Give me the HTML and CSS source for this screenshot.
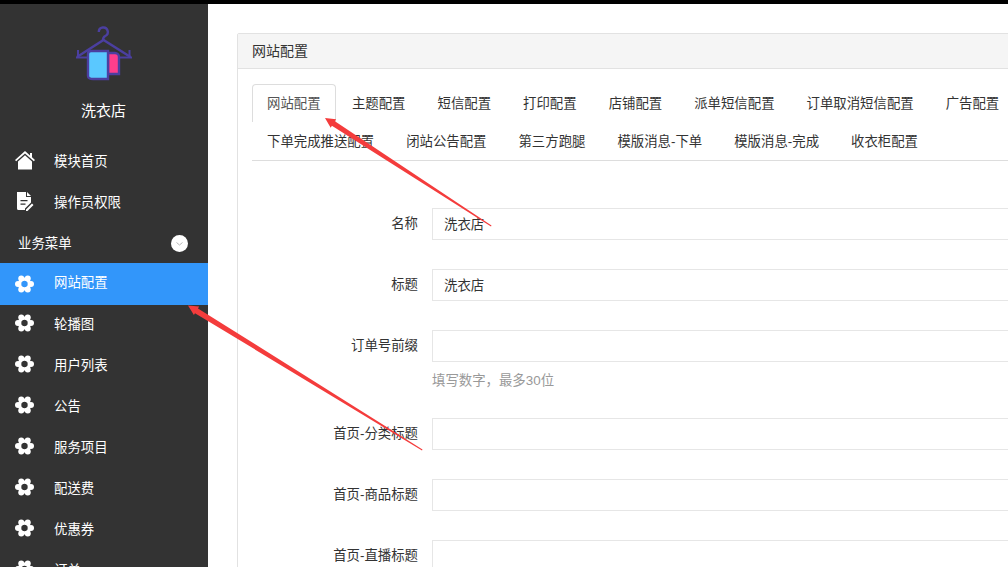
FILE: index.html
```html
<!DOCTYPE html>
<html lang="zh">
<head>
<meta charset="utf-8">
<title>网站配置</title>
<link rel="stylesheet" href="styles.css">
</head>
<body>
<svg width="0" height="0" class="defs">
  <defs>
    <symbol id="gear" viewBox="0 0 20 20">
      <circle cx="9.500" cy="10" r="4.900" fill="none" stroke="#fff" stroke-width="3.400"/>
      <circle cx="16" cy="10" r="3"/>
      <circle cx="3" cy="10" r="3"/>
      <circle cx="12.750" cy="15.600" r="3"/>
      <circle cx="6.250" cy="15.600" r="3"/>
      <circle cx="12.750" cy="4.400" r="3"/>
      <circle cx="6.250" cy="4.400" r="3"/>
    </symbol>
  </defs>
</svg>
<div class="topbar"></div>
<div class="app">
  <aside class="sidebar">
    <div class="brand">
      <svg class="logo" width="56" height="56" viewBox="0 0 56 56">
        <path d="M22.800 7a4.500 4.500 0 1 1 6.500 4c-1.600.8-2.300 1.500-2.300 4" fill="none" stroke="#4b3fa0" stroke-width="2.400"/>
        <path d="M1 32 27.500 15 54.500 32" fill="none" stroke="#4b3fa0" stroke-width="2.400"/>
        <path d="M0 32.500h13M42 32.500h14M2 25v7M53.500 25v7" fill="none" stroke="#4b3fa0" stroke-width="2"/>
        <path d="M32 28h7a4 4 0 0 1 4 4v17H32z" fill="#fe3e8c" stroke="#4b3fa0" stroke-width="2.400"/>
        <path d="M12 51V29c0-2 1-3 3-3h17v28H17c-3 0-5-1-5-3z" fill="#5ac8ff" stroke="#4b3fa0" stroke-width="2.400"/>
      </svg>
      <div class="brand-name">洗衣店</div>
    </div>
    <nav class="menu">
      <a class="item">
        <svg class="ico" viewBox="0 0 20 20"><path d="M10 1 0 10l1.200 1.300L10 3.500l8.800 7.800L20 10l-3-2.700V3h-2v2.500z"/><path d="M3 11.500 10 5.300l7 6.200v8H3z"/></svg>
        <span>模块首页</span>
      </a>
      <a class="item">
        <svg class="ico" viewBox="0 0 20 20"><path fill-rule="evenodd" d="M2 1h9v5h5v5.500L10 17.500V19H3.500A1.500 1.500 0 0 1 2 17.500zM5.500 9v1.300h7V9zm0 3.500v1.300h5v-1.300z"/><path d="M12 1l4 4h-4zM17 12.500l1.500 1.500-6 6H11v-1.500z"/></svg>
        <span>操作员权限</span>
      </a>
      <div class="group">
        <span>业务菜单</span>
        <svg class="chev" width="17" height="17" viewBox="0 0 17 17"><circle cx="8.500" cy="8.500" r="8.500" fill="#fff"/><path d="M5.500 7.500l3 2.500 3-2.500" fill="none" stroke="#b9b9b9" stroke-width="1"/></svg>
      </div>
      <a class="item active"><svg class="ico"><use href="#gear"/></svg><span>网站配置</span></a>
      <a class="item"><svg class="ico"><use href="#gear"/></svg><span>轮播图</span></a>
      <a class="item"><svg class="ico"><use href="#gear"/></svg><span>用户列表</span></a>
      <a class="item"><svg class="ico"><use href="#gear"/></svg><span>公告</span></a>
      <a class="item"><svg class="ico"><use href="#gear"/></svg><span>服务项目</span></a>
      <a class="item"><svg class="ico"><use href="#gear"/></svg><span>配送费</span></a>
      <a class="item"><svg class="ico"><use href="#gear"/></svg><span>优惠券</span></a>
      <a class="item"><svg class="ico"><use href="#gear"/></svg><span>订单</span></a>
    </nav>
  </aside>
  <main class="main">
    <section class="panel">
      <header class="panel-head">网站配置</header>
      <div class="panel-body">
        <ul class="tabs">
          <li class="tab current">网站配置</li>
          <li class="tab">主题配置</li>
          <li class="tab">短信配置</li>
          <li class="tab">打印配置</li>
          <li class="tab">店铺配置</li>
          <li class="tab">派单短信配置</li>
          <li class="tab">订单取消短信配置</li>
          <li class="tab">广告配置</li>
          <li class="tab">下单完成推送配置</li>
          <li class="tab">闭站公告配置</li>
          <li class="tab">第三方跑腿</li>
          <li class="tab">模版消息-下单</li>
          <li class="tab">模版消息-完成</li>
          <li class="tab">收衣柜配置</li>
        </ul>
        <form class="form">
          <div class="row"><label class="lbl">名称</label><div class="field"><div class="input">洗衣店</div></div></div>
          <div class="row"><label class="lbl">标题</label><div class="field"><div class="input">洗衣店</div></div></div>
          <div class="row with-help"><label class="lbl">订单号前缀</label><div class="field"><div class="input"></div><p class="help">填写数字，最多30位</p></div></div>
          <div class="row"><label class="lbl">首页-分类标题</label><div class="field"><div class="input"></div></div></div>
          <div class="row"><label class="lbl">首页-商品标题</label><div class="field"><div class="input"></div></div></div>
          <div class="row"><label class="lbl">首页-直播标题</label><div class="field"><div class="input"></div></div></div>
        </form>
      </div>
    </section>
  </main>
</div>
<svg class="arrows" width="1008" height="567" viewBox="0 0 1008 567">
  <polygon points="325,118 336.100,119.300 334.900,121.200 491.500,225.500 491,226.500 331.900,125.800 330.700,127.700" fill="#f43c3c"/>
  <polygon points="188,305.500 199.100,306.500 198,308.400 422.500,449.500 422,450.500 195,313.200 193.900,315.100" fill="#f43c3c"/>
</svg>
</body>
</html>
```

FILE: styles.css
```css
* { box-sizing: border-box; }
html, body { margin: 0; height: 100%; overflow: hidden; }
body {
  background: #fff;
  color: #333;
  font-family: "Liberation Sans", "Noto Sans CJK SC", sans-serif;
  font-size: 13.4px;
}
.defs { position: absolute; }
.topbar { height: 4px; background: #000; }
.app { display: flex; height: 563px; overflow: hidden; }
.sidebar { flex: 0 0 208px; background: #333; color: #fff; }
.brand { height: 134px; padding: 21px 0 0 0; display: flex; flex-direction: column; align-items: flex-start; }
.logo { display: block; margin-left: 76px; }
.brand-name { margin: 20px 0 0 81px; font-size: 15px; line-height: 20px; }
.menu { padding-top: 1px; }
.item { height: 41px; display: flex; align-items: center; padding-left: 15px; gap: 19px; }
.item.active { background: #3296fa; height: 42px; }
.item.active span { padding-bottom: 6px; }
.active ~ .item { padding-bottom: 6px; }
.ico { width: 20px; height: 20px; fill: #fff; flex: none; }
.group { height: 42px; display: flex; align-items: center; justify-content: space-between; padding: 0 20px 0 18px; }
.chev { display: block; margin-top: 2px; }
.main { flex: 1; min-width: 0; padding: 29px 0 0 29px; }
.panel { width: 830px; border: 1px solid #e2e2e2; border-radius: 2px 2px 0 0; }
.panel-head { height: 35px; background: #f5f5f5; border-bottom: 1px solid #e2e2e2; padding-left: 14px; line-height: 35px; font-size: 14px; }
.panel-body { padding: 15px 14px; }
.tabs { list-style: none; margin: 0; padding: 0; display: flex; flex-wrap: wrap; border-bottom: 1px solid #ddd; }
.tab { height: 38px; line-height: 40px; padding: 0 15px; margin-right: 2px; white-space: nowrap; }
.tab.current { color: #555; border: 1px solid #ddd; border-bottom: 0; border-radius: 4px 4px 0 0; padding: 0 14px; margin-right: 1.400px; line-height: 38px; background: #fff; }
.form { padding-top: 47px; }
.row { display: flex; margin-bottom: 29px; }
.lbl { flex: 0 0 166px; text-align: right; line-height: 32px; }
.field { margin-left: 14px; flex: 1; }
.input { height: 32px; border: 1px solid #e6e6e6; line-height: 32px; padding-left: 11px; }
.help { margin: 9px 0 0; line-height: 20px; color: #999; }
.row.with-help { margin-bottom: 27px; }
.arrows { position: absolute; left: 0; top: 0; pointer-events: none; }
```
